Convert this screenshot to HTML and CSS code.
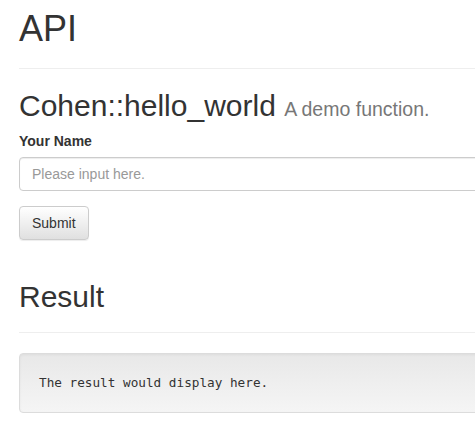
FILE: index.html
```html
<!DOCTYPE html>
<html>
<head>
<meta charset="utf-8">
<link rel="stylesheet" href="styles.css">
</head>
<body>
<div class="container">
  <div class="page-header">
    <h1>API</h1>
  </div>
  <h2 class="func-title">Cohen::hello_world <small>A demo function.</small></h2>
  <form class="api-form">
    <label class="field-label" for="name">Your Name</label>
    <input class="field-input" id="name" type="text" placeholder="Please input here.">
    <button class="btn" type="button">Submit</button>
  </form>
  <div class="page-header result-header">
    <h2>Result</h2>
  </div>
  <div class="well">
    <pre class="result-text">The result would display here.</pre>
  </div>
</div>
</body>
</html>
```
FILE: styles.css
```css
html, body {
  margin: 0;
  padding: 0;
  overflow: hidden;
  background: #fff;
}
body {
  font-family: "Liberation Sans", Arial, sans-serif;
  font-size: 14px;
  line-height: 1.42857;
  color: #333;
}
.container {
  width: 940px;
  padding: 0 19px;
}
.page-header {
  padding-bottom: 9px;
  margin: 9px 0 20px;
  border-bottom: 1px solid #eee;
}
h1, h2 {
  font-weight: 500;
  line-height: 1.1;
  margin: 0;
}
.page-header h1 {
  font-size: 36px;
  margin: 0 0 10px;
}
.func-title {
  font-size: 30px;
  margin: 0 0 10px;
}
.func-title small {
  font-size: 65%;
  color: #777;
  font-weight: normal;
}
.api-form {
  display: flex;
  flex-direction: column;
  align-items: flex-start;
}
.field-label {
  font-weight: bold;
  margin-bottom: 5px;
}
.field-input {
  box-sizing: border-box;
  width: 100%;
  height: 34px;
  padding: 6px 12px;
  font-family: inherit;
  font-size: 14px;
  color: #555;
  border: 1px solid #ccc;
  border-radius: 4px;
  box-shadow: inset 0 1px 1px rgba(0,0,0,.075);
  margin-bottom: 15px;
}
.field-input::placeholder {
  color: #999;
}
.btn {
  height: 34px;
  padding: 6px 12px;
  font-family: inherit;
  font-size: 14px;
  color: #333;
  background: linear-gradient(to bottom, #fff 0, #e0e0e0 100%);
  border: 1px solid #ccc;
  border-radius: 4px;
  box-shadow: inset 0 1px 0 rgba(255,255,255,.15), 0 1px 1px rgba(0,0,0,.075);
}
.result-header {
  margin-top: 40px;
}
.result-header h2 {
  font-size: 30px;
  margin: 0 0 10px;
}
.well {
  min-height: 20px;
  padding: 19px;
  background: linear-gradient(to bottom, #e8e8e8 0, #f5f5f5 100%);
  border: 1px solid #dcdcdc;
  border-radius: 4px;
  box-shadow: inset 0 1px 3px rgba(0,0,0,.05), 0 1px 0 rgba(255,255,255,.1);
}
.result-text {
  margin: 0;
  font-family: "DejaVu Sans Mono", monospace;
  font-size: 12.7px;
  line-height: 20px;
  color: #333;
}
```
